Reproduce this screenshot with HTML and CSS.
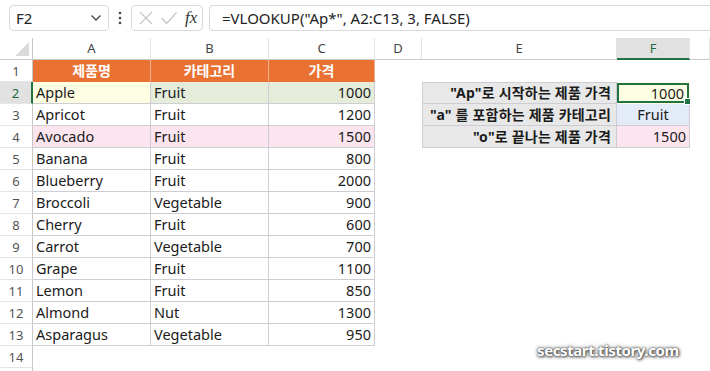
FILE: index.html
```html
<!DOCTYPE html>
<html lang="ko">
<head>
  <meta charset="UTF-8">
  <meta name="viewport" content="width=device-width, initial-scale=1.0">
  <title>VLOOKUP 와일드카드</title>
  <link rel="stylesheet" href="styles.css">
</head>
<body>
  <div class="toolbar">
    <div class="namebox">
      <span>F2</span>
      <svg width="12" height="8" viewBox="0 0 12 8"><path d="M1.5 1.5 L6 6 L10.5 1.5" fill="none" stroke="#444" stroke-width="1.3"/></svg>
    </div>
    <div class="dots">
      <svg width="4" height="14" viewBox="0 0 4 14"><circle cx="2" cy="2" r="1.3" fill="#444"/><circle cx="2" cy="7" r="1.3" fill="#444"/><circle cx="2" cy="12" r="1.3" fill="#444"/></svg>
    </div>
    <div class="fxbox">
      <svg width="16" height="16" viewBox="0 0 16 16"><path d="M2 2 L14 14 M14 2 L2 14" stroke="#c4c4c4" stroke-width="1.2"/></svg>
      <svg width="18" height="16" viewBox="0 0 18 16"><path d="M1.5 8 L6.5 13.5 L16.5 2.5" fill="none" stroke="#c4c4c4" stroke-width="1.2"/></svg>
      <span class="fx">fx</span>
    </div>
    <div class="formula">=VLOOKUP("Ap*", A2:C13, 3, FALSE)</div>
  </div>

  <div class="sheet" id="sheet">
    <!-- cells are built by the script below -->
  </div>

  <div class="watermark">secstart.tistory.com</div>

  <script>
    const cols = ['A', 'B', 'C', 'D', 'E', 'F', ''];
    const products = [
      ['Apple', 'Fruit', 1000],
      ['Apricot', 'Fruit', 1200],
      ['Avocado', 'Fruit', 1500],
      ['Banana', 'Fruit', 800],
      ['Blueberry', 'Fruit', 2000],
      ['Broccoli', 'Vegetable', 900],
      ['Cherry', 'Fruit', 600],
      ['Carrot', 'Vegetable', 700],
      ['Grape', 'Fruit', 1100],
      ['Lemon', 'Fruit', 850],
      ['Almond', 'Nut', 1300],
      ['Asparagus', 'Vegetable', 950]
    ];
    const lookups = [
      ['"Ap"로 시작하는 제품 가격', '1000', 'yel num active'],
      ['"a" 를 포함하는 제품 카테고리', 'Fruit', 'blu mid'],
      ['"o"로 끝나는 제품 가격', '1500', 'pink num']
    ];

    const sheet = document.getElementById('sheet');

    function addCell(text, cls) {
      const div = document.createElement('div');
      div.className = cls;
      div.textContent = text;
      sheet.appendChild(div);
    }

    // column headers
    addCell('', 'corner');
    cols.forEach(c => addCell(c, c === 'F' ? 'colhead sel' : 'colhead'));

    for (let r = 1; r <= 14; r++) {
      addCell(r, r === 2 ? 'rowhead sel' : 'rowhead');

      if (r === 1) {
        addCell('제품명', 'cell t hdr');
        addCell('카테고리', 'cell t hdr');
        addCell('가격', 'cell t hdr');
      } else if (r <= 13) {
        const p = products[r - 2];
        let tint = ['', '', ''];
        if (r === 2) tint = [' yel', ' grn', ' grn'];
        if (r === 4) tint = [' pink', ' pink', ' pink'];
        addCell(p[0], 'cell t' + tint[0]);
        addCell(p[1], 'cell t' + tint[1]);
        addCell(p[2], 'cell t num' + tint[2]);
      } else {
        addCell('', 'cell');
        addCell('', 'cell');
        addCell('', 'cell');
      }

      addCell('', 'cell');

      if (r >= 2 && r <= 4) {
        const l = lookups[r - 2];
        addCell(l[0], 'cell t lbl gray' + (r === 2 ? ' top' : ''));
        addCell(l[1], 'cell t ' + l[2] + (r === 2 ? ' top' : ''));
      } else {
        addCell('', 'cell');
        addCell('', 'cell');
      }

      addCell('', 'cell');
    }

    // last row, cut by the window edge
    addCell('', 'rowhead');
  </script>
</body>
</html>
```

FILE: styles.css
```css
body {
  margin: 0;
  padding: 0;
  background: #fff;
  font-family: 'Noto Sans', 'Noto Sans CJK KR', sans-serif;
  color: #1b1b1b;
  width: 710px;
  height: 371px;
  overflow: hidden;
  position: relative;
}
.toolbar {
  display: flex;
  align-items: flex-start;
  height: 38px;
  padding: 5px 0 0 9px;
  box-sizing: border-box;
  background: #fff;
}
.namebox {
  width: 100px;
  height: 26px;
  box-sizing: border-box;
  border: 1px solid #d9d9d9;
  border-radius: 4px;
  display: flex;
  align-items: center;
  justify-content: space-between;
  padding: 0 6px 0 6px;
  font-size: 15px;
  color: #222;
}
.dots {
  width: 22px;
  height: 26px;
  display: flex;
  align-items: center;
  justify-content: center;
}
.fxbox {
  width: 72px;
  height: 26px;
  box-sizing: border-box;
  border: 1px solid #d9d9d9;
  border-radius: 4px;
  display: flex;
  align-items: center;
  gap: 6px;
  padding: 0 0 0 6px;
}
.fx {
  font-family: 'Liberation Serif', serif;
  font-style: italic;
  font-size: 17px;
  color: #333;
  margin-left: 1px;
}
.formula {
  flex: 1;
  margin-left: 6px;
  height: 26px;
  box-sizing: border-box;
  border: 1px solid #d9d9d9;
  border-right: none;
  border-radius: 4px 0 0 4px;
  padding-left: 12px;
  font-size: 15px;
  line-height: 24px;
  color: #222;
  white-space: nowrap;
}
.sheet {
  display: grid;
  grid-template-columns: 33px 118px 118px 106px 47px 195px 73px 20px;
  grid-auto-rows: 22px;
}
.sheet > div {
  box-sizing: border-box;
  white-space: nowrap;
  overflow: hidden;
}
.corner {
  position: relative;
  border-right: 1px solid #c8c8c8;
  border-bottom: 1px solid #c8c8c8;
}
.corner::after {
  content: '';
  position: absolute;
  right: 3px;
  bottom: 3px;
  border-left: 14px solid transparent;
  border-bottom: 14px solid #dadada;
}
.colhead {
  font-size: 13px;
  line-height: 21px;
  text-align: center;
  color: #444;
  border-right: 1px solid #e3e3e3;
  border-bottom: 1px solid #c8c8c8;
}
.colhead.sel {
  background: #e1e1e1;
  color: #1e6b3f;
  border-bottom: 2px solid #217346;
}
.rowhead {
  font-size: 13px;
  line-height: 22px;
  text-align: center;
  color: #555;
  border-right: 1px solid #c8c8c8;
  border-bottom: 1px solid #e6e6e6;
}
.rowhead.sel {
  background: #e1e1e1;
  color: #1e6b3f;
  border-right: 2px solid #217346;
}
.cell {
  font-size: 14.5px;
  line-height: 21px;
  padding: 0 3px;
}
.t {
  border-right: 1px solid #cdcdd3;
  border-bottom: 1px solid #cdcdd3;
}
.hdr {
  background: #e97132;
  color: #fff;
  font-weight: bold;
  font-size: 14px;
  text-align: center;
  border-right-color: #f0b08e;
  border-bottom-color: #e97132;
}
.num {
  text-align: right;
}
.mid {
  text-align: center;
}
.lbl {
  font-weight: bold;
  font-size: 14px;
  letter-spacing: 0.2px;
  text-align: right;
  padding-right: 5px;
  border-left: 1px solid #cdcdd3;
}
.top {
  border-top: 1px solid #cdcdd3;
  line-height: 20px;
}
.yel { background: #fefee3; }
.grn { background: #e5ecda; }
.pink { background: #fde5ef; }
.blu { background: #e2ebf7; }
.gray { background: #e8e8e8; }
.sheet > .active {
  position: relative;
  overflow: visible;
  padding-right: 5px;
  box-shadow: inset 0 0 0 2px #217346;
  border-color: transparent;
}
.active::after {
  content: '';
  position: absolute;
  right: -2px;
  bottom: -2px;
  width: 5px;
  height: 5px;
  background: #217346;
  border: 1px solid #fff;
}
.watermark {
  position: absolute;
  left: 537px;
  top: 340px;
  font-size: 15px;
  font-weight: bold;
  color: #fff;
  letter-spacing: -0.4px;
  text-shadow: 0 0 2px #333, 1px 1px 3px #555, 0 0 5px #888;
}
```
